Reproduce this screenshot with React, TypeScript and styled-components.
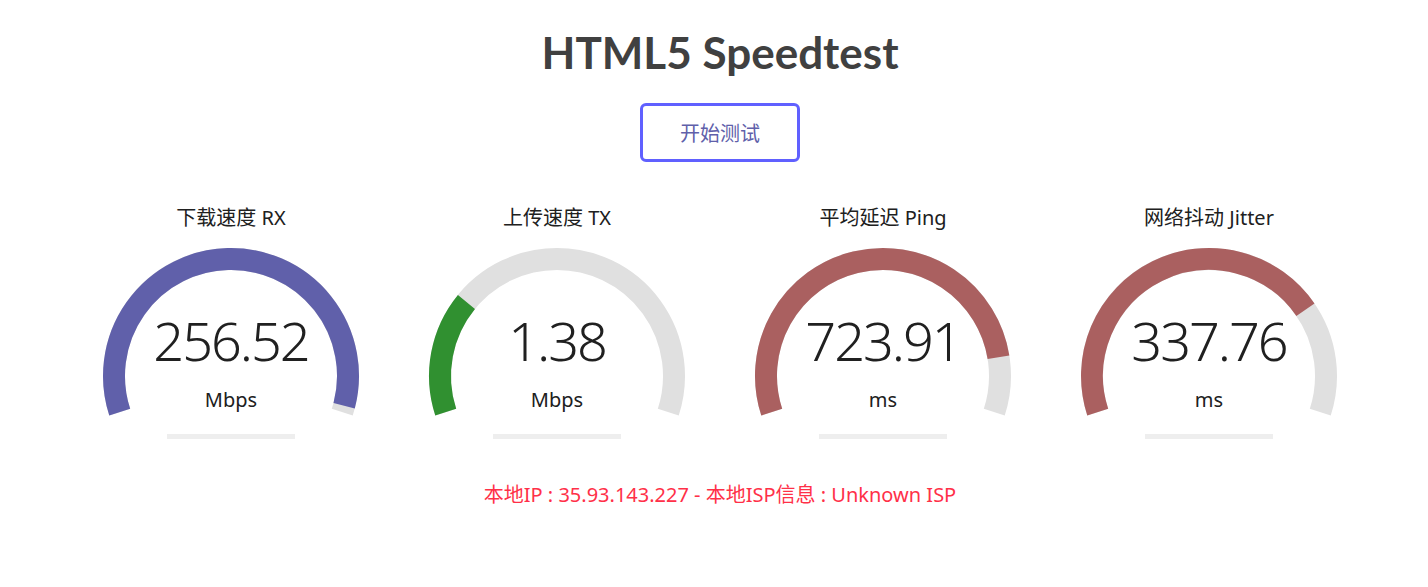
import React from 'react'
import styled, { createGlobalStyle } from 'styled-components'

const GlobalStyle = createGlobalStyle`
  html, body {
    margin: 0;
    padding: 0;
    background: #ffffff;
    overflow: hidden;
  }
  body {
    font-family: 'Noto Sans', 'Noto Sans CJK SC', sans-serif;
    color: #202020;
  }
  #root {
    width: 1440px;
  }
`

const Page = styled.div`
  display: flex;
  flex-direction: column;
  align-items: center;
  padding-top: 22px;
`

const Title = styled.h1`
  margin: 0;
  font-family: 'Lato', 'Noto Sans', sans-serif;
  font-weight: 700;
  font-size: 44px;
  line-height: 60px;
  color: #404040;
`

const StartButton = styled.button`
  margin-top: 21px;
  width: 160px;
  height: 59px;
  box-sizing: border-box;
  border: 3px solid #6060ff;
  border-radius: 6px;
  background: transparent;
  color: #6060aa;
  font-family: 'Noto Sans CJK SC', sans-serif;
  font-size: 20px;
  cursor: pointer;
`

const TestWrapper = styled.div`
  display: flex;
  margin-top: 42px;
`

const TestArea = styled.div`
  width: 320px;
  margin: 0 3px;
  display: flex;
  flex-direction: column;
  align-items: center;
`

const TestName = styled.div`
  font-family: 'Noto Sans', 'Noto Sans CJK SC', sans-serif;
  font-size: 20px;
  line-height: 28px;
  color: #202020;
`

const Dial = styled.div`
  position: relative;
  width: 320px;
  height: 200px;
  margin-top: 11px;
`

const Readout = styled.div`
  position: absolute;
  left: 0;
  right: 0;
  top: 62px;
  display: flex;
  flex-direction: column;
  align-items: center;
`

const Value = styled.div`
  font-family: 'Noto Sans', sans-serif;
  font-size: 54px;
  font-weight: 300;
  line-height: 70px;
  letter-spacing: -2px;
  color: #202020;
`

const Unit = styled.div`
  font-family: 'Noto Sans', sans-serif;
  font-size: 20px;
  line-height: 28px;
  margin-top: 11px;
  color: #202020;
`

const IpInfo = styled.div`
  margin-top: 36px;
  font-family: 'Noto Sans', 'Noto Sans CJK SC', sans-serif;
  font-size: 20px;
  color: #ff3048;
`

type Test = {
  name: string
  value: string
  unit: string
  amount: number
  color: string
}

const mbpsToAmount = (s: number) => 1 - 1 / Math.pow(1.3, Math.sqrt(s))
const msToAmount = (d: number) => 1 - 1 / Math.pow(1.08, Math.sqrt(d))

const tests: Test[] = [
  { name: '下载速度 RX', value: '256.52', unit: 'Mbps', amount: mbpsToAmount(256.52), color: '#6060aa' },
  { name: '上传速度 TX', value: '1.38', unit: 'Mbps', amount: mbpsToAmount(1.38), color: '#309030' },
  { name: '平均延迟 Ping', value: '723.91', unit: 'ms', amount: msToAmount(723.91), color: '#aa6060' },
  { name: '网络抖动 Jitter', value: '337.76', unit: 'ms', amount: msToAmount(337.76), color: '#aa6060' },
]

const CX = 160
const CY = 133
const R = 117
const START = -198
const SWEEP = 216

const point = (deg: number) => {
  const rad = (deg * Math.PI) / 180
  return `${(CX + R * Math.cos(rad)).toFixed(2)} ${(CY + R * Math.sin(rad)).toFixed(2)}`
}

const arcPath = (frac: number) => {
  const end = START + SWEEP * frac
  const large = SWEEP * frac > 180 ? 1 : 0
  return `M ${point(START)} A ${R} ${R} 0 ${large} 1 ${point(end)}`
}

const Gauge = ({ amount, color }: { amount: number; color: string }) => (
  <svg width="320" height="200" viewBox="0 0 320 200">
    <path d={arcPath(1)} fill="none" stroke="#e0e0e0" strokeWidth="22" />
    <path d={arcPath(amount)} fill="none" stroke={color} strokeWidth="22" />
    <rect x="96" y="191" width="128" height="5" fill="#eeeeee" />
  </svg>
)

const App = () => (
  <Page>
    <GlobalStyle />
    <Title>HTML5 Speedtest</Title>
    <StartButton>开始测试</StartButton>
    <TestWrapper>
      {tests.map((t) => (
        <TestArea key={t.name}>
          <TestName>{t.name}</TestName>
          <Dial>
            <Gauge amount={t.amount} color={t.color} />
            <Readout>
              <Value>{t.value}</Value>
              <Unit>{t.unit}</Unit>
            </Readout>
          </Dial>
        </TestArea>
      ))}
    </TestWrapper>
    <IpInfo>本地IP : 35.93.143.227 - 本地ISP信息 : Unknown ISP</IpInfo>
  </Page>
)

export default App
